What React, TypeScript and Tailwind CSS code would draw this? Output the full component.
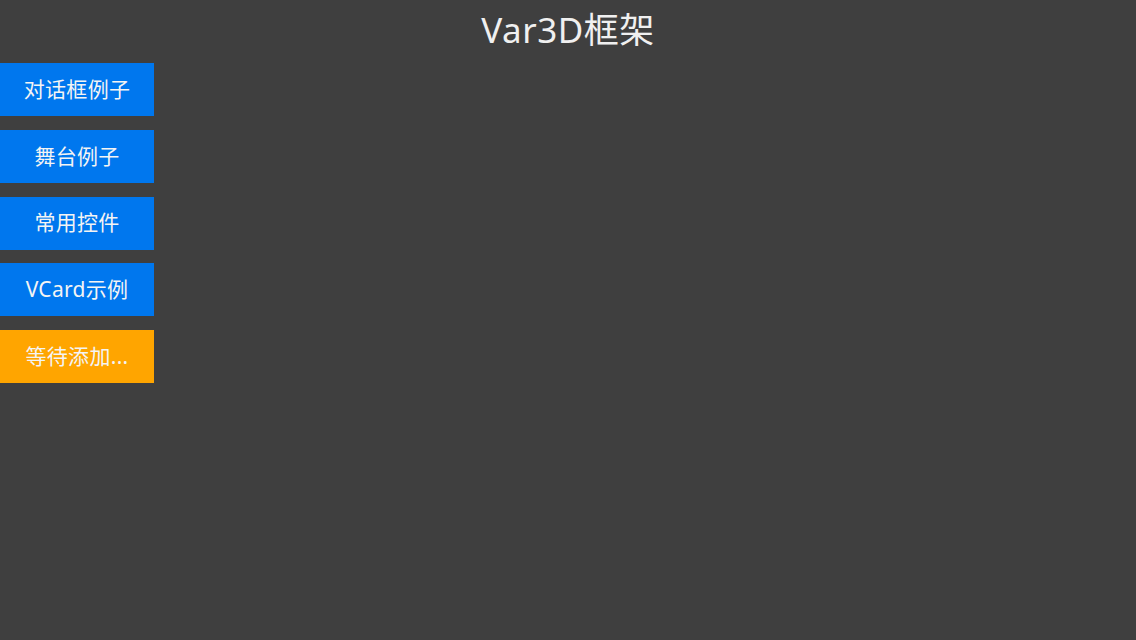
const items = [
  { label: '对话框例子', color: 'bg-[#0077ee]' },
  { label: '舞台例子', color: 'bg-[#0077ee]' },
  { label: '常用控件', color: 'bg-[#0077ee]' },
  { label: 'VCard示例', color: 'bg-[#0077ee]' },
  { label: '等待添加...', color: 'bg-[#ffa500]' },
];

export default function App() {
  return (
    <div
      className="w-[1136px] h-[640px] bg-[#3f3f3f] text-[#f0f0f0] overflow-hidden"
      style={{ fontFamily: '"Noto Sans", "Noto Sans CJK SC", sans-serif' }}
    >
      <h1 className="h-[58px] flex items-center justify-center text-[35px] tracking-[0.5px] leading-none pt-[1px]">
        Var3D框架
      </h1>
      <div className="mt-[5px] flex flex-col gap-[13.75px]">
        {items.map((item) => (
          <button
            key={item.label}
            className={`w-[154px] h-[53px] ${item.color} flex items-center justify-center text-[21px] tracking-[0.3px] text-[#f4f4f4]`}
          >
            {item.label}
          </button>
        ))}
      </div>
    </div>
  );
}
